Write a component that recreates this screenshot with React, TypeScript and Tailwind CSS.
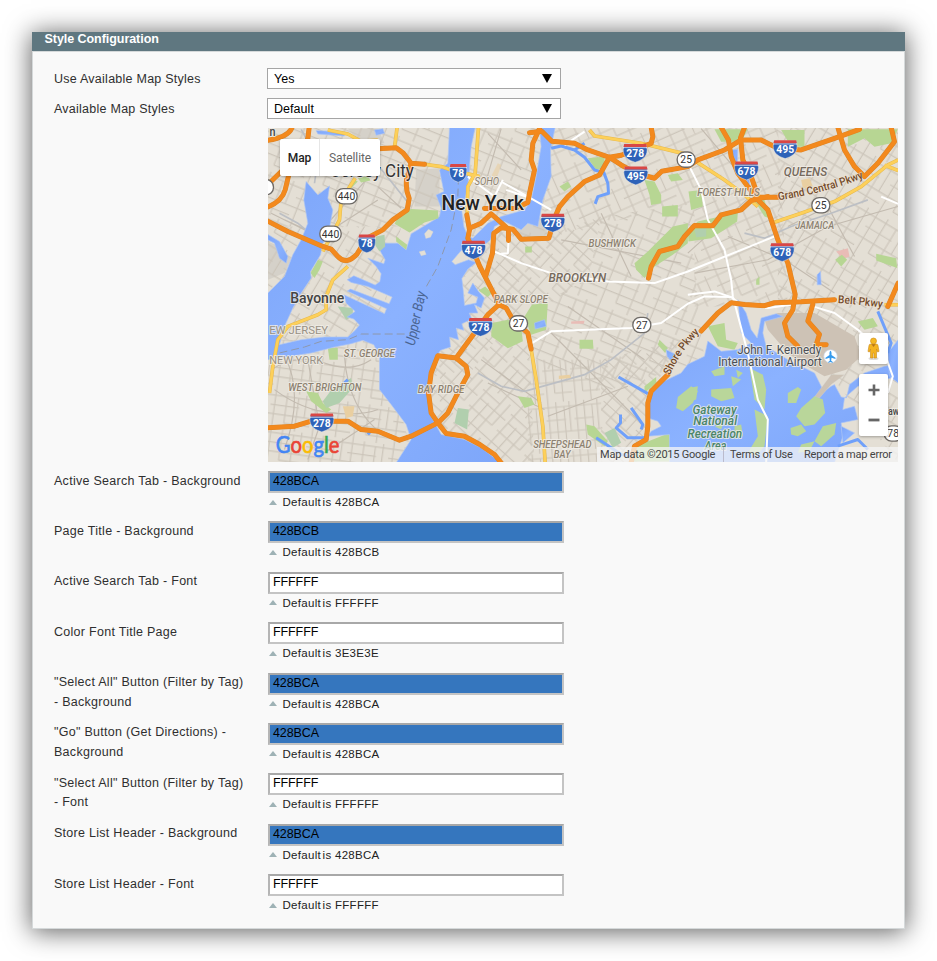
import React from "react";

const ORANGE = [
  "M0 41Q60 32 72 4",
  "M0 174L45 130",
  "M0 241Q42 225 52 190L64 140L120 36L124 2",
  "M330 66L385 63L405 78L430 110L470 113",
  "M430 110L416 160Q413 190 424 215L418 250L375 280L345 310L297 335L268 382Q236 418 210 390L190 368L165 360L60 315L0 284",
  "M597 265L605 310L600 335L636 420L682 510L693 535",
  "M605 305L640 290L670 262L722 308L722 342",
  "M815 6L795 50L790 100L800 130L785 200L780 228L740 246L650 246",
  "M785 18L822 14L852 44L920 50L960 70L1025 92L1060 86L1150 50L1155 30L1150 2",
  "M1025 92L995 145L950 165L900 210L875 240L860 275L843 335L760 338L735 308L700 304L678 320L674 380L655 445",
  "M1025 92L1060 115L1105 140L1160 155L1182 134L1260 120L1290 100L1370 70L1420 40L1480 40L1530 65L1600 70L1700 35L1775 8",
  "M1360 2L1382 40L1390 90L1410 140L1470 220L1500 250L1530 340L1560 410L1582 504L1575 550L1550 590L1560 630L1590 660",
  "M1430 2L1418 34L1425 100L1450 150L1472 212L1530 212",
  "M1142 455L1150 420L1175 375L1230 360L1250 330L1280 297L1335 298L1360 265L1420 250L1450 222L1500 210",
  "M1710 2L1730 70L1760 120L1790 150L1830 110L1880 45L1870 2",
  "M1300 614L1350 560L1390 529L1430 534L1490 538L1520 529L1600 526L1700 520",
  "M1860 540L1891 470",
  "M1635 534L1620 584L1655 624L1645 655L1675 655",
  "M1200 745L1150 795L1140 830L1140 900L1135 940L1100 960L1090 1010",
  "M0 905L80 900L130 885L240 885L280 910L330 915L395 942L430 930L510 890L540 860L570 800L600 745L595 720L565 695L510 688L490 740L482 800L490 860L510 890L535 922L590 930L636 955L680 985L700 1010",
  "M565 695L620 620L660 565L693 535L715 545L735 580L780 620L790 668",
];

const YELLOW = [
  "M180 10L240 22L280 44L330 40", "M388 2L380 62", "M470 113L520 120L550 130L636 150",
  "M262 155L220 220L215 280L195 320L165 375", "M240 420L195 460L175 510L175 550L150 565L60 600L30 640L15 720L5 800",
  "M632 2L622 140L600 180L598 265", "M965 10L980 28L1120 50L1260 84", "M1285 105L1370 160L1430 205L1470 240",
  "M1520 287L1600 260L1700 225L1780 180L1860 115L1891 100", "M1850 116L1891 132", "M790 670L805 760L825 900L832 1010",
  "M1850 535L1891 535",
];

const WHITE = [
  "M680 375L760 410L850 440L1020 465L1160 470L1260 435L1520 330", "M1265 120L1300 190L1320 280L1370 370L1390 460L1395 510L1440 680L1470 820L1500 880L1495 1010",
  "M790 652L850 615L1090 605L1180 590L1260 532L1310 510L1390 512L1420 535L1500 545L1570 535", "M1635 540L1700 560L1770 610L1850 680L1875 750L1860 800",
  "M890 55L950 15", "M700 165L850 250M715 190L790 215", "M600 150L680 210L705 160", "M1840 210L1891 232", "M1260 505L1340 495L1390 512",
  "M722 345L720 380L700 382",
];

const PARKS = [
  "128 440 150 400 165 405 155 430 140 455", "270 155 300 148 308 162 280 168", "245 178 262 160 270 165 250 185",
  "960 95 1010 90 1010 125 985 130", "875 180 900 165 910 180 890 195",
  "1130 160 1160 165 1180 205 1180 230 1150 235 1145 205", "1183 240 1230 235 1230 270 1183 270", "1200 145 1230 140 1245 160 1210 165",
  "1215 300 1260 290 1260 350 1215 385 1160 420 1130 455 1105 430 1100 410 1140 375", "1260 315 1290 285 1410 258 1408 285 1370 310 1330 335 1262 345",
  "1262 195 1300 190 1305 240 1270 250", "1540 10 1610 10 1610 60 1570 60", "1340 8 1440 8 1420 45 1360 45", "1740 8 1890 8 1870 50 1820 60 1790 35 1740 60",
  "1460 190 1490 220 1505 275 1490 270 1465 230", "1825 382 1885 395 1888 425 1825 402", "1702 400 1722 385 1738 400 1720 420", "772 360 792 360 792 378 772 378",
  "672 590 720 580 760 600 765 645 720 666 670 630", "770 570 792 535 840 528 835 610 790 625", "935 640 975 640 977 667 935 667", "750 810 790 815 800 835 770 845",
  "632 492 652 480 672 500 660 512", "180 665 210 665 210 700 185 700", "115 795 150 800 165 830 190 850 175 860 130 825",
  "0 655 60 655 30 670", "955 895 980 900 1020 945 1010 960 960 925", "1130 780 1165 752 1165 770 1130 800", "1770 585 1815 575 1830 600 1790 610",
  "1320 600 1370 590 1375 640 1410 650 1400 670 1350 660", "1090 970 1130 950 1205 920 1210 1006 1090 1006", "1465 460 1475 450 1475 475 1465 475", "1175 640 1200 665 1192 680 1170 655",
];

const ISLANDS = [
  "1230 812 1270 780 1290 795 1275 830 1245 855 1225 845", "1265 785 1290 780 1285 820 1268 825", "1330 735 1370 720 1370 745 1340 750", "1330 790 1390 785 1400 815 1360 825 1330 810",
  "1390 750 1420 760 1395 780", "1405 730 1425 740 1410 755", "1445 725 1485 745 1495 790 1490 850 1460 820", "1560 800 1590 782 1600 790 1585 830 1560 830",
  "1600 845 1640 810 1665 820 1672 860 1640 895 1610 900 1585 870", "1568 905 1600 895 1615 915 1590 930 1570 925", "1665 900 1705 890 1700 925 1660 960 1640 945",
  "1460 850 1500 870 1490 960 1465 990 1440 980 1470 930", "1400 900 1420 895 1425 930 1400 935", "1600 955 1640 945 1625 975 1590 980", "1340 900 1365 895 1360 910",
];

const WATER = [
  "M115 165L150 205L185 178L180 215L195 250L180 330L165 350L158 385L128 435L130 455L100 500L75 545L50 600L35 655L100 640L170 632L240 632L262 612L275 596L258 578L238 572L262 555L235 530L228 505L252 516L350 562L356 547L238 494L248 488L364 532L373 512L300 480L250 468L238 460L258 448L322 476L336 466L340 442L325 420L300 395L348 412L352 400L335 370L345 350L390 350L415 370L430 322L500 280L515 270L520 245L505 205L528 195L515 130L540 110L545 2L622 2L610 60L600 180L582 255L588 300L600 330L615 335L660 290L700 270L770 250L790 222L805 150L820 60L815 2L862 2L848 70L850 150L825 220L810 300L780 290L760 310L710 285L680 300L668 340L650 355L630 372L600 365L580 372L552 405L562 415L602 400L625 408L600 428L582 456L586 490L590 537L625 530L630 512L600 500L615 470L632 495L650 515L640 545L620 535L630 560L604 560L612 578L582 592L588 612L565 605L572 640L545 632L548 662L518 672L506 690L490 740L481 800L490 870L520 925L590 940L640 965L700 1010L385 1010L430 940L415 895L370 835L335 790L335 690L318 655L285 642L250 652L200 662L130 680L0 700L0 500L50 450L75 385L100 340L120 290L108 220Z",
  "M0 324L35 345L60 390L55 410L35 395L20 350L0 340Z", "M145 12L225 15L230 28L150 22Z", "M320 10L345 6L350 20L325 26Z",
  "M1392 70L1410 68L1408 120L1395 120Z", "M1430 140L1445 140L1445 175L1438 190Z", "M1648 445L1658 435L1660 475L1648 475Z", "M800 590L830 580L835 600L802 608Z",
  "M1190 764L1240 740L1260 714L1310 690L1320 644L1360 675L1410 670L1450 650L1420 620L1410 520L1435 560L1450 610L1468 635L1480 575L1525 562L1545 570L1490 585L1485 620L1495 660L1560 700L1640 740L1665 790L1640 815L1690 780L1700 775L1720 812L1736 815L1745 775L1790 740L1850 720L1880 715L1870 755L1770 780L1730 815L1725 850L1760 840L1770 880L1720 890L1725 930L1700 1010L1205 1010L1205 925L1140 930L1150 915L1180 900L1170 885L1140 875L1145 800L1165 780Z",
  "M1195 670L1225 685L1210 705L1198 690Z", "M1860 680L1891 640L1891 770L1865 750Z", "M1720 900L1760 920L1725 950Z",
];

const WATERLINES = [
  "M850 65L880 58L920 70L950 92L980 130L1008 138L1020 170L1022 200L990 210L982 232M1000 130L1012 110M920 70L950 50", "M1052 752L1140 802", "M1090 845L1125 895L1120 910M1058 865L1058 890L1045 905L1080 935L1140 935",
  "M985 935L1030 965L1060 985L1090 990", "M300 925L308 915", "M1830 555L1870 650L1860 680", "M225 775L240 760", "M1710 960L1770 940L1800 970",
];

type Region = { d: string; p: string };
const REGIONS: Region[] = [
  { d: "0 0 590 0 590 300 0 300", p: "gridA" },
  { d: "0 300 400 300 330 640 0 640", p: "gridB" },
  { d: "0 640 340 640 440 1010 0 1010", p: "gridC" },
  { d: "590 0 830 0 830 330 590 330", p: "gridA" },
  { d: "830 0 1280 0 1280 230 830 330", p: "gridE" },
  { d: "640 310 830 330 1000 270 960 460 700 620 560 800 480 720", p: "gridD" },
  { d: "1000 270 1280 230 1280 440 960 640 880 500 960 460", p: "gridA" },
  { d: "560 800 700 620 780 570 800 1010 480 1010 480 720", p: "gridF" },
  { d: "780 570 880 500 960 640 1280 440 1310 700 1000 800 780 700", p: "gridA" },
  { d: "780 700 1000 700 1000 1010 780 1010", p: "gridG" },
  { d: "1280 0 1530 0 1560 540 1280 540", p: "gridE" },
  { d: "1530 0 1891 0 1891 1010 1530 540", p: "gridB" },
  { d: "1000 700 1240 640 1150 800 1140 1010 1000 1010", p: "gridD" },
];

const poly = (s: string) => <polygon key={s} points={s} />;
const path = (s: string) => <path key={s} d={s} />;

function Grid({ id, a, w, h }: { id: string; a: number; w: number; h: number }) {
  return (
    <pattern id={id} width={w} height={h} patternUnits="userSpaceOnUse" patternTransform={`rotate(${a})`}>
      <path
        d={`M0 ${h * 0.1}H${w}M0 ${h * 0.36}H${w * 0.7}M0 ${h * 0.6}H${w}M${w * 0.38} ${h * 0.82}H${w}M${w * 0.1} 0V${h}M${w * 0.38} 0V${h * 0.82}M${w * 0.66} ${h * 0.1}V${h}M${w * 0.85} 0V${h * 0.6}`}
        stroke="#ccc5ba"
        strokeWidth="3.5"
        fill="none"
      />
    </pattern>
  );
}

function Interstate({ x, y, n }: { x: number; y: number; n: string }) {
  const w = n.length > 2 ? 36 : 26;
  return (
    <g transform={`translate(${x} ${y})`}>
      <path d={`M${-w + 3} -25H${w - 3}L${w} -10C${w} 14 18 22 0 28C-18 22 ${-w} 14 ${-w} -10Z`} fill="#2e62b8" stroke="#e9e6e6" strokeWidth="1.5" />
      <path d={`M${-w + 3} -27H${w - 3}L${w - 1} -18H${-w + 1}Z`} fill="#d94745" />
      <path d={`M${-w} -16H${w}`} stroke="#fff" strokeWidth="2" />
      <text y="12" textAnchor="middle" fontSize="31" fontWeight="700" fill="#fff">{n}</text>
    </g>
  );
}

function Route({ x, y, n }: { x: number; y: number; n: string }) {
  const w = n.length > 2 ? 32 : 27;
  return (
    <g transform={`translate(${x} ${y})`}>
      <rect x={-w} y="-23" width={w * 2} height="46" rx="22" fill="#fff" stroke="#6e6a66" strokeWidth="4" />
      <text y="11" textAnchor="middle" fontSize="31" fontWeight="400" fill="#333">{n}</text>
    </g>
  );
}

type LabelProps = { x: number; y: number; s: number; w: number; t: string; c?: string; i?: boolean; b?: number };
function Label({ x, y, s, w, t, c = "#8d8271", i = false, b = 500 }: LabelProps) {
  return (
    <text x={x} y={y} fontSize={s} textLength={w} lengthAdjust="spacingAndGlyphs" fill={c} fontWeight={b} fontStyle={i ? "italic" : "normal"}
      stroke="#f1eee8" strokeWidth="6" strokeOpacity="0.8" strokeLinejoin="round" paintOrder="stroke">
      {t}
    </text>
  );
}

function MapDrawing() {
  return (
    <svg viewBox="0.5 4 1890 1002" preserveAspectRatio="none" className="block h-full w-full font-['Roboto',sans-serif]">
      <defs>
        <Grid id="gridA" a={22} w={158} h={122} />
        <Grid id="gridB" a={31} w={130} h={144} />
        <Grid id="gridC" a={8} w={124} h={112} />
        <Grid id="gridD" a={42} w={130} h={96} />
        <Grid id="gridE" a={-24} w={148} h={118} />
        <Grid id="gridF" a={-48} w={134} h={112} />
        <Grid id="gridG" a={-5} w={84} h={150} />
        <linearGradient id="bay" x1="0" y1="0" x2="1" y2="1">
          <stop offset="0" stopColor="#7ba4f9" />
          <stop offset="0.5" stopColor="#8bb2ff" />
          <stop offset="1" stopColor="#7ba4f9" />
        </linearGradient>
        <path id="grandCentral" d="M1532 221Q1670 200 1785 155" />
        <path id="shore" d="M1206 748Q1240 670 1302 612" />
        <path id="belt" d="M1710 530Q1780 534 1846 545" />
      </defs>
      <rect x="0" y="0" width="1900" height="1012" fill="#e4dfd5" />
      <g fill="#d5d1c9">
        <polygon points="0 345 35 360 70 400 50 440 0 460" />
        <polygon points="240 6 330 6 350 50 280 50" />
        <polygon points="445 130 515 125 515 240 440 240" />
        <polygon points="735 280 830 270 840 335 760 335" />
      </g>
      {REGIONS.map((g) => <polygon key={g.d} points={g.d} fill={`url(#${g.p})`} />)}
      <g stroke="#c3bbb0" strokeWidth="3.5" fill="none">
        <path d="M10 260L130 320L180 290L330 120M50 280L160 330L330 220M330 180L400 245M660 20L760 130M700 6L650 180M880 340L1240 410M1000 260L1090 450M1260 380L1480 180M1280 440L1500 400L1680 300L1890 240M1300 6L1490 230M640 700L820 830M660 770L830 850M900 540L1130 700M850 620L1110 880M840 870L1080 780M1380 330L1550 400L1700 500M1560 300L1680 240L1760 390" />
        <path d="M10 730Q90 680 170 710T310 700M20 790Q100 850 190 860T330 850M50 690Q110 800 50 970M120 700L155 900L120 1000M230 690Q240 850 350 930M170 980L320 880" />
      </g>
      <g fill="none" stroke="#bcbfc4" strokeWidth="5">
        <path d="M630 740L700 780L770 795L950 745L1030 700L1130 620L1140 560" />
        <path d="M1430 320L1490 335L1570 300L1690 260L1800 220" />
        <path d="M35 260L90 290L150 340M100 8L150 100L140 170M270 40L430 240" />
      </g>
      <polygon points="1490 580 1530 560 1640 560 1760 630 1780 690 1735 730 1670 750 1610 715 1560 680 1500 610" fill="#cdc2b5" />
      <g fill="#e9cfa1">
        <polygon points="672 145 690 110 700 115 690 145 675 165" opacity=".6" />
        <polygon points="225 840 260 840 255 870 235 875" />
        <polygon points="873 748 905 745 910 755 873 758" />
        <polygon points="1600 160 1625 155 1635 180 1605 185" />
      </g>
      <g fill="#e9bcb6">
        <polygon points="1705 375 1740 365 1745 390 1725 398" />
        <polygon points="910 585 950 583 948 592 910 592" />
      </g>
      <g fill="#b7d693">{PARKS.map(poly)}</g>
      <g fill="#b1cfae">
        <polygon points="210 540 255 545 255 570 235 580" />
        <polygon points="165 825 195 785 250 755 255 785 215 830 175 845" />
        <polygon points="570 845 603 850 598 910 560 890" />
        <polygon points="1280 310 1315 305 1315 330 1285 332" />
        <polygon points="1010 920 1040 905 1060 950 1035 965" />
      </g>
      <g fill="url(#bay)" stroke="#aec6f5" strokeWidth="2">{WATER.map(path)}</g>
      <g fill="none" stroke="#6fa0fa" strokeWidth="9" strokeLinejoin="round">{WATERLINES.map(path)}</g>
      <g fill="#e4dfd5" stroke="#d6d4d0" strokeWidth="1">
        <polygon points="470 322 482 308 496 316 488 332 474 336" />
        <polygon points="454 376 470 372 475 384 460 388" />
        <polygon points="1640 812 1690 745 1730 745 1690 775 1655 815" fill="#cdc2b5" />
      </g>
      <g fill="#b1cfae"><polygon points="325 330 350 325 352 360 335 375 318 350" /></g>
      <polygon points="395 265 430 247 510 252 512 275 470 288 425 318 380 292" fill="#b7d693" />
      <polygon points="385 330 418 355 415 370 385 345" fill="#b7d693" />
      <g fill="#b9d69a">{ISLANDS.map(poly)}</g>
      <g stroke="#8e98ac" strokeWidth="3" fill="none" strokeDasharray="24 12">
        <path d="M572 150L570 210L550 310L510 420L470 490" />
        <path d="M35 680L110 662L160 645L240 640L280 623L415 623" />
      </g>
      <g fill="none" stroke="#fff" strokeWidth="6" strokeLinejoin="round">{WHITE.map(path)}</g>
      <g fill="none" stroke="#e6b84d" strokeWidth="11" strokeLinejoin="round">{YELLOW.map(path)}</g>
      <g fill="none" stroke="#fdd05a" strokeWidth="8" strokeLinejoin="round">{YELLOW.map(path)}</g>
      <g fill="none" stroke="#dd8526" strokeWidth="15" strokeLinejoin="round" strokeLinecap="round">{ORANGE.map(path)}</g>
      <g fill="none" stroke="#f3891d" strokeWidth="12" strokeLinejoin="round" strokeLinecap="round">{ORANGE.map(path)}</g>

      <Label x={5} y={28} s={36} w={18} t="n" c="#444" />
      <Label x={190} y={152} s={54} w={248} t="Jersey City" c="#333" b={400} />
      <Label x={521} y={249} s={60} w={247} t="New York" c="#222" b={500} />
      <Label x={620} y={175} s={32} w={74} t="SOHO" i b={400} />
      <Label x={962} y={361} s={31} w={142} t="BUSHWICK" i />
      <Label x={842} y={468} s={38} w={173} t="BROOKLYN" i c="#75695c" />
      <Label x={678} y={529} s={31} w={162} t="PARK SLOPE" i />
      <Label x={1288} y={208} s={31} w={188} t="FOREST HILLS" i />
      <Label x={1548} y={148} s={38} w={130} t="QUEENS" i c="#75695c" />
      <Label x={1582} y={308} s={31} w={117} t="JAMAICA" i />
      <Label x={67} y={530} s={45} w={162} t="Bayonne" c="#444" />
      <Label x={4} y={622} s={35} w={177} t="EW JERSEY" c="#999185" b={400} />
      <Label x={4} y={713} s={35} w={162} t="NEW YORK" c="#999185" b={400} />
      <Label x={228} y={692} s={31} w={153} t="ST. GEORGE" i />
      <Label x={61} y={793} s={31} w={220} t="WEST BRIGHTON" i />
      <Label x={450} y={799} s={31} w={140} t="BAY RIDGE" i />
      <Label x={796} y={965} s={31} w={175} t="SHEEPSHEAD" i />
      <Label x={858} y={996} s={31} w={50} t="BAY" i />
      <text x="440" y="660" fontSize="42" fontStyle="italic" fill="#4a6593" textLength="166" lengthAdjust="spacingAndGlyphs" transform="rotate(-78 440 660)">Upper Bay</text>
      <Label x={1408} y={682} s={37} w={252} t="John F. Kennedy" c="#4a4e54" b={400} />
      <Label x={1351} y={720} s={37} w={311} t="International Airport" c="#4a4e54" b={400} />
      <Label x={1274} y={862} s={37} w={132} t="Gateway" c="#4a8568" i />
      <Label x={1276} y={897} s={37} w={132} t="National" c="#4a8568" i />
      <Label x={1259} y={935} s={37} w={164} t="Recreation" c="#4a8568" i />
      <Label x={1310} y={970} s={37} w={66} t="Area" c="#4a8568" i />
      <Label x={1861} y={867} s={34} w={32} t="aw" c="#444" />
      <g fill="#704a2c" fontSize="33" fontWeight="500" stroke="#f6e7d4" strokeWidth="4" strokeOpacity="0.7" paintOrder="stroke">
        <text textLength="264" lengthAdjust="spacingAndGlyphs"><textPath href="#grandCentral">Grand Central Pkwy</textPath></text>
        <text textLength="158" lengthAdjust="spacingAndGlyphs"><textPath href="#shore">Shore Pkwy</textPath></text>
        <text textLength="134" lengthAdjust="spacingAndGlyphs"><textPath href="#belt">Belt Pkwy</textPath></text>
      </g>
      <circle cx="1688" cy="690" r="20" fill="#fff" stroke="#c9d7e8" strokeWidth="2" />
      <path d="M1688 673Q1692 675 1691 686L1703 694V698L1691 694L1690 703L1695 707V709L1688 707L1681 709V707L1686 703L1685 694L1673 698V694L1685 686Q1684 675 1688 673Z" fill="#369bed" />

      <Interstate x={571} y={139} n="78" />
      <Interstate x={297} y={351} n="78" />
      <Interstate x={617} y={370} n="478" />
      <Interstate x={855} y={289} n="278" />
      <Interstate x={1102} y={79} n="278" />
      <Interstate x={1104} y={147} n="495" />
      <Interstate x={1552} y={68} n="495" />
      <Interstate x={1436} y={132} n="678" />
      <Interstate x={1543} y={377} n="678" />
      <Interstate x={638} y={602} n="278" />
      <Interstate x={162} y={889} n="278" />
      <Route x={236} y={209} n="440" />
      <Route x={188} y={322} n="440" />
      <Route x={1255} y={99} n="25" />
      <Route x={1659} y={236} n="25" />
      <Route x={752} y={591} n="27" />
      <Route x={1122} y={596} n="27" />
      <Route x={1876} y={922} n="78" />
      <Route x={-10} y={182} n="4" />
      <g fontSize="69" strokeWidth="2" className="font-['Lato',sans-serif]">
        <text x="24" y="979" textLength="191" lengthAdjust="spacingAndGlyphs">
          <tspan fill="#4285f4" stroke="#4285f4">G</tspan><tspan fill="#ea4335" stroke="#ea4335">o</tspan><tspan fill="#fbbc05" stroke="#fbbc05">o</tspan><tspan fill="#4285f4" stroke="#4285f4">g</tspan><tspan fill="#34a853" stroke="#34a853">l</tspan><tspan fill="#ea4335" stroke="#ea4335">e</tspan>
        </text>
      </g>
    </svg>
  );
}

function MapView() {
  return (
    <div className="relative ml-[235px] mt-[8px] h-[333.5px] w-[630px] overflow-hidden font-['Roboto',sans-serif]">
      <MapDrawing />
      <div className="absolute left-[12px] top-[11px] flex h-[37px] w-[100px] items-center rounded-[2px] bg-white text-[12px] shadow-[0_1px_3px_rgba(0,0,0,0.3)]">
        <span className="flex h-full w-[40px] items-center justify-center border-r border-[#e6e6e6] font-medium text-[#222]">Map</span>
        <span className="grow text-center tracking-[-0.1px] text-[#666]">Satellite</span>
      </div>
      <div className="absolute left-[591px] top-[205px] flex h-[31px] w-[29px] items-center justify-center rounded-[2px] bg-white shadow-[0_1px_3px_rgba(0,0,0,0.3)]">
        <svg width="15" height="24" viewBox="0 0 15 24">
          <ellipse cx="7.5" cy="21.5" rx="5" ry="1.5" fill="#ddd" />
          <path d="M3 8.5Q3 7 5 7H10Q12 7 12 8.5L13 14.5L11.5 15L10.5 12V21H8V16H7V21H4.500V12L3.500 15L2 14.500Z" fill="#f4b320" stroke="#c98a1b" strokeWidth=".6" />
          <circle cx="7.500" cy="4" r="3" fill="#f6b922" stroke="#c98a1b" strokeWidth=".6" />
          <path d="M5.500 7.200L7.500 10L9.500 7.200Z" fill="#b5741b" />
        </svg>
      </div>
      <div className="absolute left-[591px] top-[246px] flex h-[62px] w-[29px] flex-col items-center justify-between rounded-[2px] bg-white py-[10px] shadow-[0_1px_3px_rgba(0,0,0,0.3)]">
        <svg width="12" height="12" viewBox="0 0 12 12"><path d="M6 .5V11.500M.5 6H11.500" stroke="#666" strokeWidth="2.600" /></svg>
        <svg width="12" height="12" viewBox="0 0 12 12"><path d="M.5 6H11.500" stroke="#666" strokeWidth="2.800" /></svg>
      </div>
      <div className="absolute bottom-0 right-0 flex h-[15px] w-[301px] items-center whitespace-nowrap bg-[#f5f5f5]/75 text-[11px] leading-[15px] text-[#444]">
        <span className="w-[126px] pl-[3px] tracking-[-0.22px]">Map data ©2015 Google</span>
        <span className="w-[75px] border-l border-[#bbc] pl-[6px] tracking-[-0.2px]">Terms of Use</span>
        <span className="pl-[6px] tracking-[-0.22px]">Report a map error</span>
      </div>
    </div>
  );
}

function SelectRow({ label, value }: { label: string; value: string }) {
  return (
    <div className="flex h-[30px] items-start">
      <span className="w-[213px] pt-[2px] leading-[19px]">{label}</span>
      <div className="flex h-[21px] w-[294px] items-center justify-between border border-[#a5a5a5] bg-white pl-[6px] pr-[8px] text-[12.5px] tracking-[0.05px] text-black">
        <span className="pt-px">{value}</span>
        <span className="h-0 w-0 border-x-[5px] border-t-[9px] border-x-transparent border-t-black" />
      </div>
    </div>
  );
}

type Field = { lines: string[]; value: string; hint: string };
const FIELDS: Field[] = [
  { lines: ["Active Search Tab - Background"], value: "428BCA", hint: "428BCA" },
  { lines: ["Page Title - Background"], value: "428BCB", hint: "428BCB" },
  { lines: ["Active Search Tab - Font"], value: "FFFFFF", hint: "FFFFFF" },
  { lines: ["Color Font Title Page"], value: "FFFFFF", hint: "3E3E3E" },
  { lines: ['"Select All" Button (Filter by Tag)', "- Background"], value: "428BCA", hint: "428BCA" },
  { lines: ['"Go" Button (Get Directions) -', "Background"], value: "428BCA", hint: "428BCA" },
  { lines: ['"Select All" Button (Filter by Tag)', "- Font"], value: "FFFFFF", hint: "FFFFFF" },
  { lines: ["Store List Header - Background"], value: "428BCA", hint: "428BCA" },
  { lines: ["Store List Header - Font"], value: "FFFFFF", hint: "FFFFFF" },
];

function FieldRow({ lines, value, hint }: Field) {
  const blue = value !== "FFFFFF";
  return (
    <div className="flex h-[50.4px] items-start">
      <div className="w-[214px] whitespace-nowrap pt-[0.5px] leading-[19.5px]">
        {lines.map((l) => <div key={l}>{l}</div>)}
      </div>
      <div>
        <div className={`h-[22px] w-[296px] border-2 border-b-[#c4c4c4] border-l-[#b5b5b5] border-r-[#c4c4c4] border-t-[#a8a8a8] pl-[3px] text-[12.5px] leading-[17px] tracking-[-0.1px] text-black ${blue ? "bg-[#3576be]" : "bg-white"}`}>
          {value}
        </div>
        <div className="flex items-center pl-px pt-px text-[11.5px] leading-[16px] tracking-[0.3px] text-[#222]">
          <span className="mr-[5.5px] h-0 w-0 border-x-[4px] border-b-[5px] border-x-transparent border-b-[#9eb2b5]" />
          <span>Default<span className="ml-[1.5px]">is</span> {hint}</span>
        </div>
      </div>
    </div>
  );
}

export default function App() {
  return (
    <div className="h-[961px] w-[937px] overflow-hidden bg-white pl-[32px] pt-[32px] font-['Liberation_Sans',Arial,sans-serif] text-[12.5px] text-[#2f2f2f]">
      <div className="h-[897px] w-[873px] bg-[#f9f9f9] shadow-[0_2px_24px_1px_rgba(0,0,0,0.62)]">
        <div className="h-[19px] bg-[#5f7780] pl-[12.5px] text-[12.5px] font-bold leading-[15px] tracking-[-0.05px] text-white">Style Configuration</div>
        <div className="h-[878px] border border-[#d5d9da]">
          <div className="pl-[21px] pt-[16px] tracking-[0.25px]">
            <SelectRow label="Use Available Map Styles" value="Yes" />
            <SelectRow label="Available Map Styles" value="Default" />
          </div>
          <div className="-mt-[8px]"><MapView /></div>
          <div className="pl-[21px] pt-[9.5px] tracking-[0.28px]">
            {FIELDS.map((f, i) => <FieldRow key={i} {...f} />)}
          </div>
        </div>
      </div>
    </div>
  );
}
